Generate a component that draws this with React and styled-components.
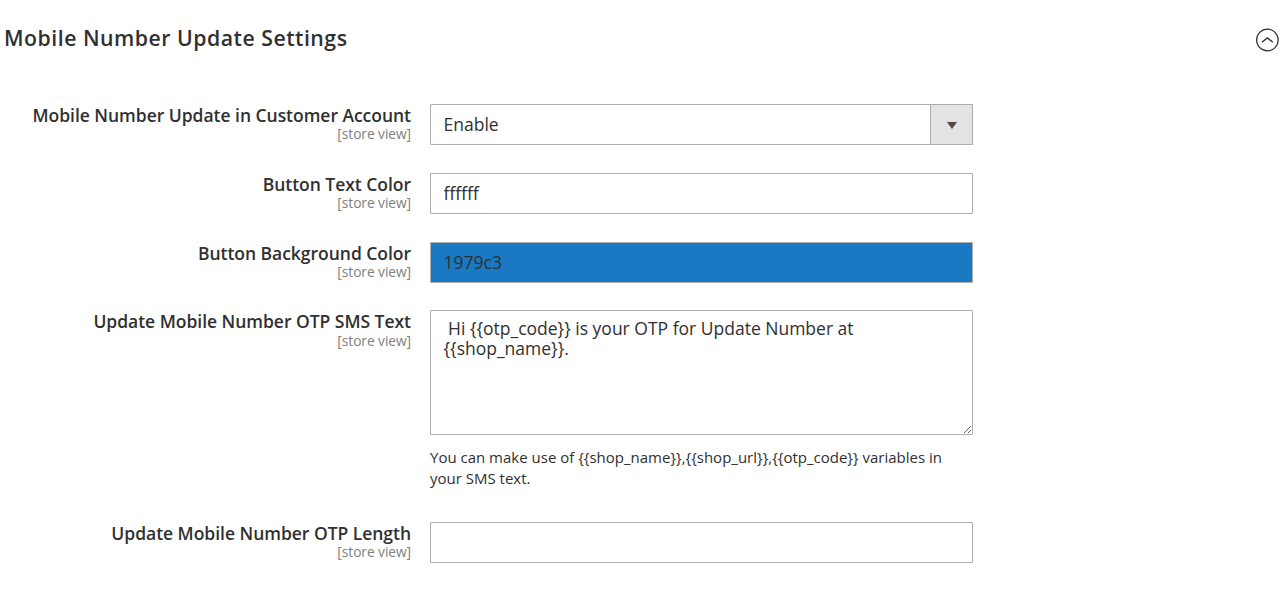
import React, { useState } from "react";
import styled, { createGlobalStyle, css } from "styled-components";

const GlobalStyle = createGlobalStyle`
  * {
    box-sizing: border-box;
  }

  body {
    margin: 0;
    background-color: #fff;
    color: #303030;
    font-family: "Open Sans", "Noto Sans", sans-serif;
  }
`;

const MainContainer = styled.main`
  height: 596px;
  overflow: hidden;
`;

const SectionHeader = styled.header`
  display: flex;
  justify-content: space-between;
  align-items: center;
  height: 104px;
  padding: 0 0 24px 4px;

  h2 {
    margin: 0;
    padding-bottom: 4px;
    font-size: 21.25px;
    font-weight: 600;
    line-height: 30px;
    letter-spacing: 0.5px;
  }
`;

const CollapseButton = styled.button`
  display: flex;
  padding: 0;
  border: none;
  background: none;
  color: #303030;
  cursor: pointer;
`;

const FieldRow = styled.div`
  display: grid;
  grid-template-columns: 411px 543px;
  column-gap: 19px;
  margin-bottom: ${(props) => props.$gap || "28px"};
`;

const FieldLabel = styled.label`
  text-align: right;
  font-size: 17.5px;
  font-weight: 600;
  line-height: 21px;
  letter-spacing: -0.03px;
  padding-top: 1px;

  span {
    display: block;
    margin-top: ${(props) => props.$scopeOffset || "-1px"};
    color: #808080;
    font-size: 13.75px;
    font-weight: 400;
    line-height: 17px;
    letter-spacing: -0.06px;
  }
`;

const controlStyles = css`
  display: block;
  width: 100%;
  height: 41px;
  margin: 0;
  padding: 0 12.5px 2px;
  border: 1px solid #adadad;
  border-radius: 1px;
  background-color: ${(props) => props.$background || "#fff"};
  color: #303030;
  font-family: inherit;
  font-size: 17.5px;
  line-height: 20px;
  outline: none;
`;

const TextInput = styled.input`
  ${controlStyles}
`;

const SelectWrapper = styled.div`
  display: grid;
  grid-template-columns: 1fr 43px;
`;

const Select = styled.select`
  ${controlStyles}
  appearance: none;
  grid-area: 1 / 1 / 2 / 3;
`;

const SelectArrow = styled.div`
  display: flex;
  align-items: center;
  justify-content: center;
  grid-area: 1 / 2;
  padding-top: 2px;
  border: 1px solid #adadad;
  background-color: #e3e3e3;
  pointer-events: none;
`;

const TextArea = styled.textarea`
  ${controlStyles}
  height: 125px;
  padding: 7px 12.5px;
  resize: both;
`;

const Note = styled.p`
  margin: 12px 0 0;
  font-size: 15px;
  line-height: 21px;
`;

const Field = ({ id, label, gap, scopeOffset, children }) => (
  <FieldRow $gap={gap}>
    <FieldLabel htmlFor={id} $scopeOffset={scopeOffset}>
      {label}
      <span>[store view]</span>
    </FieldLabel>
    <div>{children}</div>
  </FieldRow>
);

const App = () => {
  const [isOpen, setIsOpen] = useState(true);
  const [enabled, setEnabled] = useState("1");
  const [textColor, setTextColor] = useState("ffffff");
  const [backgroundColor, setBackgroundColor] = useState("1979c3");
  const [smsText, setSmsText] = useState(
    " Hi {{otp_code}} is your OTP for Update Number at {{shop_name}}."
  );
  const [otpLength, setOtpLength] = useState("");

  return (
    <MainContainer>
      <GlobalStyle />
      <SectionHeader>
        <h2>Mobile Number Update Settings</h2>
        <CollapseButton onClick={() => setIsOpen(!isOpen)}>
          <svg width="25" height="24" viewBox="0 0 25 24" fill="none">
            <circle cx="12.4" cy="12" r="10.8" stroke="currentColor" strokeWidth="1.2" />
            <path
              d={isOpen ? "M6.9 14.2 12.4 10 17.9 14.2" : "M6.9 9.8 12.4 14 17.9 9.8"}
              stroke="currentColor"
              strokeWidth="1.4"
            />
          </svg>
        </CollapseButton>
      </SectionHeader>

      {isOpen && (
        <form>
          <Field id="enabled" label="Mobile Number Update in Customer Account">
            <SelectWrapper>
              <Select
                id="enabled"
                value={enabled}
                onChange={(event) => setEnabled(event.target.value)}
              >
                <option value="1">Enable</option>
                <option value="0">Disable</option>
              </Select>
              <SelectArrow>
                <svg width="10" height="7" viewBox="0 0 10 7">
                  <path d="M0 0h10L5 7z" fill="#514943" />
                </svg>
              </SelectArrow>
            </SelectWrapper>
          </Field>

          <Field id="text-color" label="Button Text Color">
            <TextInput
              id="text-color"
              value={textColor}
              $background={`#${textColor}`}
              onChange={(event) => setTextColor(event.target.value)}
            />
          </Field>

          <Field id="background-color" label="Button Background Color" gap="27px">
            <TextInput
              id="background-color"
              value={backgroundColor}
              $background={`#${backgroundColor}`}
              onChange={(event) => setBackgroundColor(event.target.value)}
            />
          </Field>

          <Field
            id="sms-text"
            label="Update Mobile Number OTP SMS Text"
            gap="33px"
            scopeOffset="0"
          >
            <TextArea
              id="sms-text"
              value={smsText}
              spellCheck={false}
              onChange={(event) => setSmsText(event.target.value)}
            />
            <Note>
              {
                "You can make use of {{shop_name}},{{shop_url}},{{otp_code}} variables in your SMS text."
              }
            </Note>
          </Field>

          <Field id="otp-length" label="Update Mobile Number OTP Length">
            <TextInput
              id="otp-length"
              value={otpLength}
              onChange={(event) => setOtpLength(event.target.value)}
            />
          </Field>
        </form>
      )}
    </MainContainer>
  );
};

export default App;
